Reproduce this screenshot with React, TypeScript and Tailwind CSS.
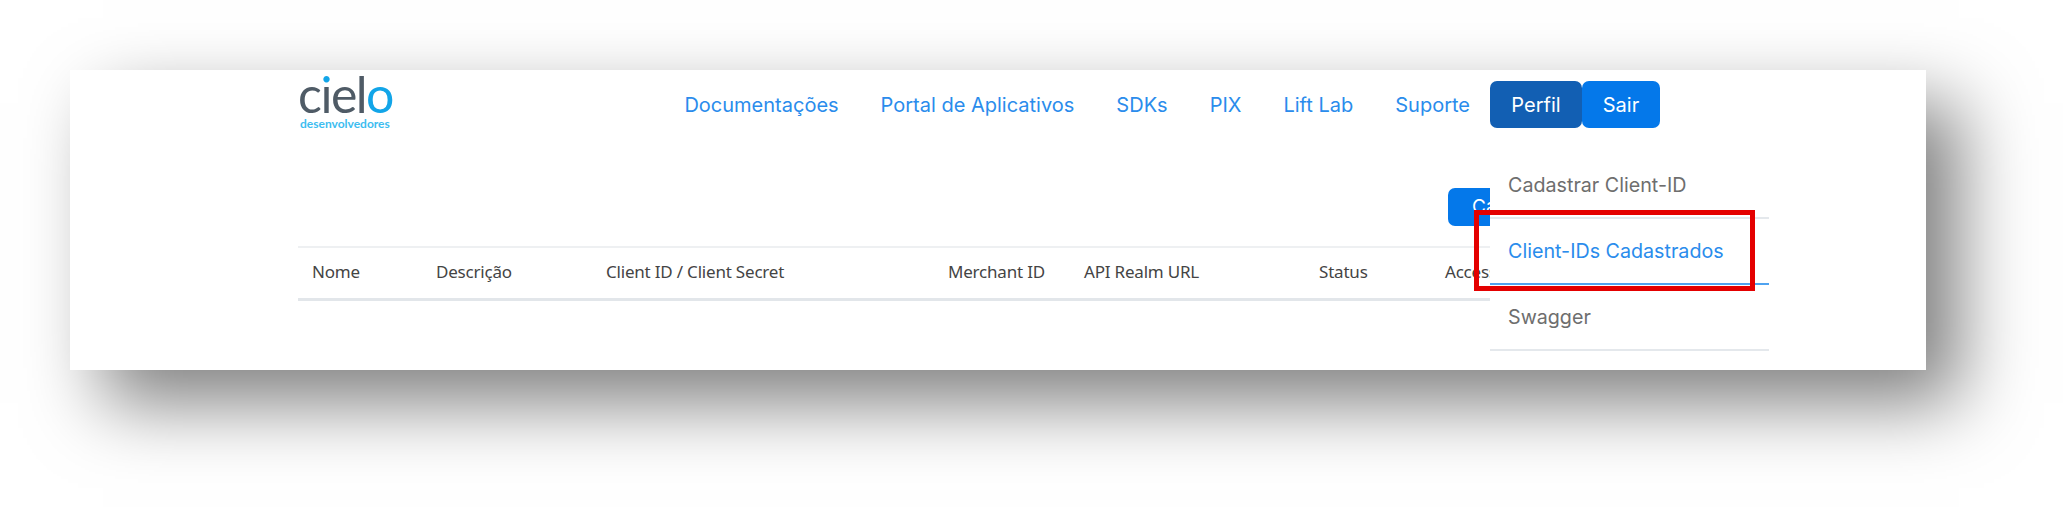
const navLinks = [
  { label: "Documentações", margin: "ml-auto" },
  { label: "Portal de Aplicativos", margin: "ml-[42px]" },
  { label: "SDKs", margin: "ml-[42px]" },
  { label: "PIX", margin: "ml-[42px]" },
  { label: "Lift Lab", margin: "ml-[42px]" },
  { label: "Suporte", margin: "ml-[42px]" },
];

const columns = [
  { label: "Nome", width: "w-[124px]" },
  { label: "Descrição", width: "w-[170px]" },
  { label: "Client ID / Client Secret", width: "w-[342px]" },
  { label: "Merchant ID", width: "w-[136px]" },
  { label: "API Realm URL", width: "w-[235px]" },
  { label: "Status", width: "w-[126px]" },
  { label: "Access", width: "w-[70px]" },
];

function Logo() {
  return (
    <div className="relative w-[94px] h-[47px] font-['Lato',sans-serif] select-none">
      <div className="text-[50px] leading-[26px] tracking-[-1.5px] text-[#4f5b66] whitespace-nowrap">
        c
        {/* blue dot on the i, dark stem */}
        <span className="bg-[linear-gradient(#12a5e8_0,#12a5e8_22px,#4f5b66_22px)] bg-clip-text text-transparent">i</span>
        el<span className="text-[#12a5e8]">o</span>
      </div>
      <div className="absolute left-[2px] top-[37px] text-[12px] leading-[12px] font-bold text-[#3dbdf0] whitespace-nowrap">
        desenvolvedores
      </div>
    </div>
  );
}

function DropdownItem({ label, active }: { label: string; active?: boolean }) {
  return (
    <div
      className={`h-[66px] pl-[18px] pt-[20px] border-b-2 text-[19.7px] leading-[24px] ${
        active ? "border-[#4fa3f0] text-[#2a8cec]" : "border-[#e4e8ec] text-[#6e6e6e]"
      }`}
    >
      {label}
    </div>
  );
}

export default function App() {
  return (
    <div className="min-h-[512px] bg-white pt-[70px] pl-[70px] overflow-hidden">
      <div className="relative w-[1856px] h-[300px] bg-white shadow-[33px_33px_70px_0px_rgba(0,0,0,0.5)] font-['Noto_Sans',sans-serif]">
        <header className="flex items-center h-[47px] pt-[11px] pl-[228px] pr-[266px] box-content font-['Inter',sans-serif]">
          <Logo />
          {navLinks.map((link) => (
            <a key={link.label} className={`${link.margin} text-[20px] text-[#2a8cec] whitespace-nowrap`}>
              {link.label}
            </a>
          ))}
          <button className="ml-[20px] w-[92px] h-[47px] rounded-[7px] bg-[#125fb3] text-white text-[20px]">
            Perfil
          </button>
          <button className="w-[78px] h-[47px] rounded-[7px] bg-[#0478ea] text-white text-[20px]">
            Sair
          </button>
        </header>

        <div className="flex justify-end h-[38px] mt-[60px] pr-[358px]">
          <button className="w-[120px] rounded-[7px] bg-[#0478ea] text-white text-[19px] text-left pl-[24px] font-['Inter',sans-serif]">
            Cadastrar
          </button>
        </div>

        <div className="flex items-center h-[55px] mt-[20px] ml-[228px] w-[1233px] border-t-2 border-b-[3px] border-t-[#eef0f2] border-b-[#e2e6ea] pl-[14px] pb-[2px] text-[17px] tracking-[-0.2px] text-[#444444]">
          {columns.map((col) => (
            <div key={col.label} className={`${col.width} whitespace-nowrap`}>
              {col.label}
            </div>
          ))}
        </div>

        {/* open profile menu */}
        <div className="absolute left-[1420px] top-[68px] w-[279px] bg-white pt-[15px] font-['Inter',sans-serif]">
          <DropdownItem label="Cadastrar Client-ID" />
          <DropdownItem label="Client-IDs Cadastrados" active />
          <DropdownItem label="Swagger" />
        </div>

        {/* annotation */}
        <div className="absolute left-[1404px] top-[140px] w-[281px] h-[81px] border-[5px] border-[#e40000]" />
      </div>
    </div>
  );
}
